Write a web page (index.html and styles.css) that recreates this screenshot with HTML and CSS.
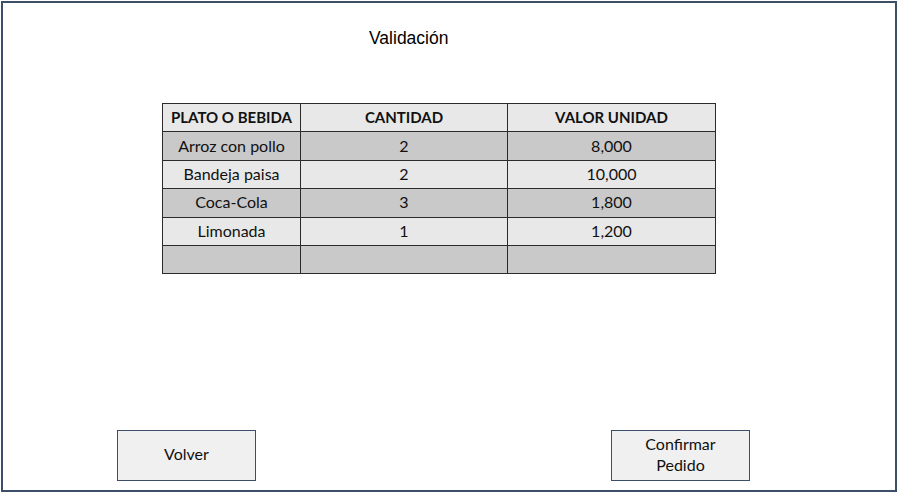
FILE: index.html
```html
<!DOCTYPE html>
<html lang="es">
<head>
<meta charset="utf-8">
<title>Validación</title>
<link rel="stylesheet" href="styles.css">
</head>
<body>
<div class="frame">
  <h1 class="title">Validación</h1>
  <table class="orders">
    <thead>
      <tr><th class="c1">PLATO O BEBIDA</th><th class="c2">CANTIDAD</th><th class="c3">VALOR UNIDAD</th></tr>
    </thead>
    <tbody>
      <tr class="dark"><td>Arroz con pollo</td><td>2</td><td>8,000</td></tr>
      <tr class="light"><td>Bandeja paisa</td><td>2</td><td>10,000</td></tr>
      <tr class="dark"><td>Coca-Cola</td><td>3</td><td>1,800</td></tr>
      <tr class="light"><td>Limonada</td><td>1</td><td>1,200</td></tr>
      <tr class="dark"><td></td><td></td><td></td></tr>
    </tbody>
  </table>
  <div class="actions">
    <button class="btn btn-back">Volver</button>
    <button class="btn btn-confirm">Confirmar<br>Pedido</button>
  </div>
</div>
</body>
</html>
```
FILE: styles.css
```css
html, body {
  margin: 0;
  padding: 0;
  background: #ffffff;
}
.frame {
  position: relative;
  margin: 1px 0 0 1px;
  width: 892px;
  height: 487px;
  border: 2px solid #3b5068;
  display: flex;
  flex-direction: column;
}
.title {
  margin: 25px 0 0 366px;
  font-family: "Liberation Sans", Arial, sans-serif;
  font-size: 17.5px;
  font-weight: normal;
  line-height: 20px;
  color: #000;
}
.orders {
  margin: 55px 0 0 159px;
  border-collapse: collapse;
  font-family: Lato, "Open Sans", sans-serif;
  font-size: 16px;
  color: #111;
  table-layout: fixed;
  width: 554px;
}
.orders th, .orders td {
  border: 1px solid #2b2b2b;
  height: 25.4px;
  padding: 0 0 2px 0;
  text-align: center;
}
.orders th {
  background: #e8e8e8;
  font-weight: bold;
  font-size: 15px;
}
.c1 { width: 137px; }
.c2 { width: 206px; }
.c3 { width: 207px; }
.dark td { background: #c9c9c9; }
.light td { background: #e8e8e8; }
.actions {
  margin-top: auto;
  margin-bottom: 9px;
  display: flex;
  padding-left: 114px;
  gap: 355px;
}
.btn {
  width: 139px;
  height: 51px;
  background: #f0f0f0;
  border: 1px solid #3b5068;
  font-family: Lato, "Open Sans", sans-serif;
  font-size: 16px;
  line-height: 21px;
  color: #111;
  padding: 0 0 4px 0;
}
```
